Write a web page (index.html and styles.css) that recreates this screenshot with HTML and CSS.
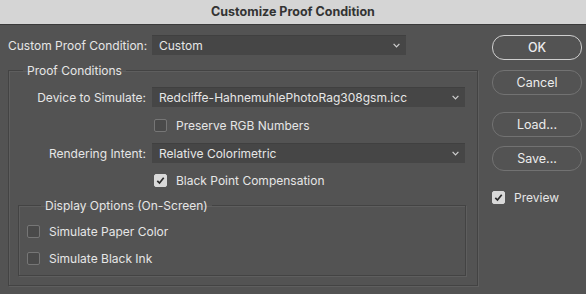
FILE: index.html
```html
<!DOCTYPE html>
<html>
<head>
<meta charset="utf-8">
<link rel="stylesheet" href="styles.css">
</head>
<body>
<div class="titlebar">Customize Proof Condition</div>
<div class="main">
  <div class="left">
    <div class="top-row">
      <span class="top-label">Custom Proof Condition:</span>
      <div class="select select-custom"><span>Custom</span><svg class="chev" width="7" height="5" viewBox="0 0 7 5"><polyline points="0.6,0.8 3.5,3.8 6.4,0.8" fill="none" stroke="#cfcfcf" stroke-width="1.2"/></svg></div>
    </div>
    <fieldset class="group outer">
      <legend>Proof Conditions</legend>
      <div class="form-grid">
        <span class="lbl">Device to Simulate:</span>
        <div class="select"><span>Redcliffe-HahnemuhlePhotoRag308gsm.icc</span><svg class="chev" width="7" height="5" viewBox="0 0 7 5"><polyline points="0.6,0.8 3.5,3.8 6.4,0.8" fill="none" stroke="#cfcfcf" stroke-width="1.2"/></svg></div>
        <span></span>
        <label class="check"><span class="box"></span>Preserve RGB Numbers</label>
        <span class="lbl">Rendering Intent:</span>
        <div class="select"><span>Relative Colorimetric</span><svg class="chev" width="7" height="5" viewBox="0 0 7 5"><polyline points="0.6,0.8 3.5,3.8 6.4,0.8" fill="none" stroke="#cfcfcf" stroke-width="1.2"/></svg></div>
        <span></span>
        <label class="check last"><span class="box checked"><svg width="13" height="13" viewBox="0 0 13 13"><polyline points="3.3,6.8 5.5,9 9.7,3.8" fill="none" stroke="#2b2b2b" stroke-width="1.7"/></svg></span>Black Point Compensation</label>
      </div>
      <fieldset class="group inner">
        <legend>Display Options (On-Screen)</legend>
        <label class="check"><span class="box"></span>Simulate Paper Color</label>
        <label class="check second"><span class="box"></span>Simulate Black Ink</label>
      </fieldset>
    </fieldset>
  </div>
  <div class="right">
    <div class="btn btn-ok">OK</div>
    <div class="btn btn-cancel">Cancel</div>
    <div class="btn btn-load">Load...</div>
    <div class="btn btn-save">Save...</div>
    <label class="check preview"><span class="box checked"><svg width="13" height="13" viewBox="0 0 13 13"><polyline points="3.3,6.8 5.5,9 9.7,3.8" fill="none" stroke="#2b2b2b" stroke-width="1.7"/></svg></span>Preview</label>
  </div>
</div>
</body>
</html>
```
FILE: styles.css
```css
* { box-sizing: border-box; }
html, body {
  margin: 0;
  padding: 0;
  width: 586px;
  height: 294px;
  overflow: hidden;
  background: #535353;
  font-family: Inter, "Noto Sans", sans-serif;
  font-size: 12px;
  color: #e6e6e6;
}
.titlebar {
  height: 25px;
  background: #d5d5d5;
  border-bottom: 1px solid #3a3a3a;
  color: #333;
  font-weight: 700;
  font-size: 12.5px;
  text-align: center;
  line-height: 24px;
}
.main {
  display: flex;
  padding: 10px 0 0 8px;
  gap: 14px;
}
.left { width: 470px; }
.top-row {
  display: flex;
  align-items: center;
  height: 20px;
}
.top-label { width: 144px; }
.select {
  height: 20px;
  background: #464646;
  border-top: 1px solid #404040;
  display: flex;
  align-items: center;
  justify-content: space-between;
  padding: 0 6px 0 7px;
}
.select-custom { width: 254px; }
.chev { flex: none; }
.group {
  margin: 0;
  padding: 0;
  border: 1px solid #434343;
  box-shadow: 1px 1px 0 #5e5e5e, inset 1px 1px 0 #5e5e5e;
  min-inline-size: 0;
}
.group legend {
  margin-left: 14px;
  padding: 0 4px;
  line-height: 15px;
}
.outer {
  margin-top: 8px;
  width: 470px;
  padding-bottom: 9px;
}
.form-grid {
  display: grid;
  grid-template-columns: 137px 313px;
  column-gap: 6px;
  grid-auto-rows: 20px;
  row-gap: 8px;
  padding-top: 9px;
}
.lbl {
  text-align: right;
  align-self: center;
}
.check {
  display: flex;
  align-items: center;
  gap: 9px;
  height: 20px;
}
.form-grid .check { padding-left: 2px; }
.form-grid .last { margin-top: -1px; }
.box {
  width: 13px;
  height: 13px;
  flex: none;
  border: 1px solid #767676;
  border-radius: 2px;
  background: #4a4a4a;
}
.box.checked {
  background: #d9d9d9;
  border-color: #d9d9d9;
}
.box.checked svg {
  display: block;
  margin: -1px;
}
.inner {
  margin: 7px 0 0 9px;
  width: 448px;
  padding: 8px 0 7px 8px;
}
.inner .second { margin-top: 7px; }
.right {
  width: 90px;
  display: flex;
  flex-direction: column;
}
.btn {
  height: 25px;
  border: 1px solid #727272;
  border-radius: 12px;
  display: flex;
  align-items: center;
  justify-content: center;
  font-size: 12.5px;
  color: #ececec;
}
.btn-ok {
  border: 1.5px solid #cfcfcf;
  font-weight: 500;
}
.btn-cancel { margin-top: 10px; }
.btn-load { margin-top: 17px; }
.btn-save { margin-top: 9px; }
.preview { margin-top: 16px; }
```
